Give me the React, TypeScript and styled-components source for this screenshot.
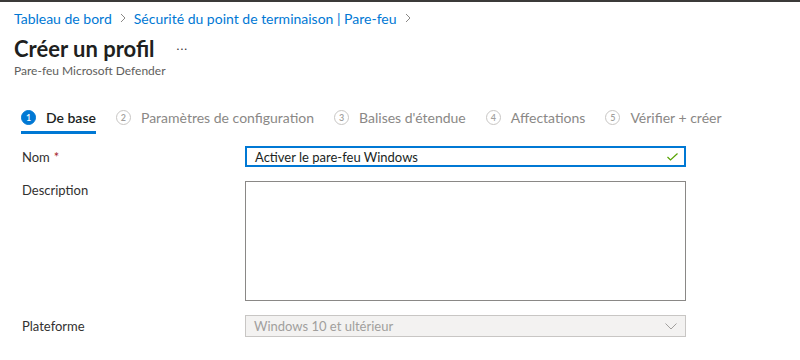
import { createGlobalStyle, styled } from "styled-components";

const GlobalStyle = createGlobalStyle`
    body {
        margin: 0;
        background: #ffffff;
        font-family: "Segoe UI", Lato, "Noto Sans", sans-serif;
        color: #323130;
    }
`;

const TopBar = styled.div`
    height: 2px;
    background: #3b3a39;
`;

const Header = styled.div`
    padding: 6px 14px 0;
`;

const Breadcrumb = styled.nav`
    display: flex;
    align-items: center;
    gap: 7px;
    height: 20px;
    font-size: 14px;
    color: #0078d4;
`;

const Chevron = styled.svg`
    width: 8px;
    height: 10px;
    color: #8a8886;
`;

const TitleRow = styled.div`
    display: flex;
    align-items: center;
    margin-top: 5px;
    height: 30px;
`;

const Title = styled.h1`
    margin: 0;
    font-size: 22px;
    font-weight: 700;
    color: #201f1e;
`;

const More = styled.span`
    margin-left: 22px;
    font-size: 12px;
    letter-spacing: 1px;
    color: #323130;
    position: relative;
    top: -3px;
`;

const Subtitle = styled.div`
    font-size: 12px;
    color: #605e5c;
    margin-top: 0;
`;

const Steps = styled.div`
    display: flex;
    align-items: stretch;
    gap: 20px;
    padding: 0 21px;
    margin-top: 24px;
`;

const Step = styled.div<{ $active?: boolean }>`
    display: flex;
    align-items: center;
    gap: 10px;
    height: 32px;
    padding-top: 1px;
    box-sizing: border-box;
    font-size: 14px;
    font-weight: ${(p) => (p.$active ? 600 : 400)};
    color: ${(p) => (p.$active ? "#201f1e" : "#8a8886")};
    border-bottom: 3px solid ${(p) => (p.$active ? "#0078d4" : "transparent")};
`;

const StepNumber = styled.span<{ $active?: boolean }>`
    display: inline-flex;
    align-items: center;
    justify-content: center;
    width: 15px;
    height: 15px;
    border-radius: 50%;
    box-sizing: border-box;
    font-size: 9px;
    font-weight: 600;
    background: ${(p) => (p.$active ? "#0078d4" : "transparent")};
    border: 1px solid ${(p) => (p.$active ? "#0078d4" : "#c8c6c4")};
    color: ${(p) => (p.$active ? "#ffffff" : "#a19f9d")};
`;

const Form = styled.div`
    display: grid;
    grid-template-columns: 223px 441px;
    row-gap: 14px;
    padding: 12px 22px 0;
`;

const Label = styled.label<{ $top?: boolean }>`
    font-size: 13px;
    color: #323130;
    display: flex;
    align-items: ${(p) => (p.$top ? "flex-start" : "center")};
    padding-top: ${(p) => (p.$top ? "1px" : "0")};
`;

const Required = styled.span`
    color: #a4262c;
    margin-left: 4px;
`;

const TextField = styled.div`
    display: flex;
    align-items: center;
    justify-content: space-between;
    height: 21px;
    box-sizing: border-box;
    border: 2px solid #0078d4;
    padding: 0 6px 0 8px;
    font-size: 13px;
    color: #201f1e;
`;

const TextArea = styled.div`
    height: 120px;
    box-sizing: border-box;
    border: 1px solid #8a8886;
    background: #ffffff;
`;

const Select = styled.div`
    display: flex;
    align-items: center;
    justify-content: space-between;
    height: 22px;
    box-sizing: border-box;
    border: 1px solid #c8c6c4;
    background: #f3f2f1;
    padding: 0 8px;
    font-size: 13px;
    color: #a19f9d;
`;

const steps = [
    "De base",
    "Paramètres de configuration",
    "Balises d'étendue",
    "Affectations",
    "Vérifier + créer",
];

const ChevronIcon = () => (
    <Chevron viewBox="0 0 8 10">
        <path d="M2 1l4 4-4 4" fill="none" stroke="currentColor" strokeWidth="1" />
    </Chevron>
);

const App: React.FunctionComponent = () => {
    return (
        <>
            <GlobalStyle />
            <TopBar />
            <Header>
                <Breadcrumb>
                    <span>Tableau de bord</span>
                    <ChevronIcon />
                    <span>Sécurité du point de terminaison | Pare-feu</span>
                    <ChevronIcon />
                </Breadcrumb>
                <TitleRow>
                    <Title>Créer un profil</Title>
                    <More>...</More>
                </TitleRow>
                <Subtitle>Pare-feu Microsoft Defender</Subtitle>
            </Header>
            <Steps>
                {steps.map((name, i) => (
                    <Step key={name} $active={i === 0}>
                        <StepNumber $active={i === 0}>{i + 1}</StepNumber>
                        {name}
                    </Step>
                ))}
            </Steps>
            <Form>
                <Label>
                    Nom<Required>*</Required>
                </Label>
                <TextField>
                    Activer le pare-feu Windows
                    <svg width="11" height="8" viewBox="0 0 11 8">
                        <path d="M0.5 4l3 3 7-6.5" fill="none" stroke="#57a300" strokeWidth="1.2" />
                    </svg>
                </TextField>
                <Label $top>Description</Label>
                <TextArea />
                <Label>Plateforme</Label>
                <Select>
                    Windows 10 et ultérieur
                    <svg width="12" height="7" viewBox="0 0 12 7">
                        <path d="M0.5 0.5l5.5 5.5 5.5-5.5" fill="none" stroke="#a19f9d" strokeWidth="1" />
                    </svg>
                </Select>
            </Form>
        </>
    );
};

export default App;
